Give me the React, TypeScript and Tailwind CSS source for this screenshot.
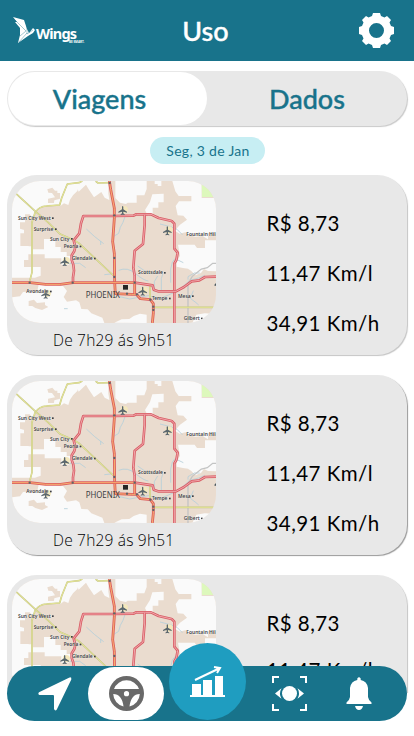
import React from "react";

function Plane({ x, y }: { x: number; y: number }) {
  return (
    <g transform={`translate(${x} ${y})`}>
      <circle cx="5" cy="-3" r="11" fill="#f4e8bd" />
      <path
        d="M-2-12Q0-16 2-12V-4L13 3V6L2 3V8L6 11V13L0 12L-6 13V11L-2 8V3L-13 6V3L-2-4Z"
        fill="#5a666d"
      />
    </g>
  );
}

const places = [
  { name: "Sun City West", x: 54, y: 150, w: 98, dx: 158, dy: 144 },
  { name: "Surprise", x: 101, y: 182, w: 59, dx: 167, dy: 177 },
  { name: "Sun City", x: 150, y: 212, w: 58, dx: 215, dy: 206 },
  { name: "Peoria", x: 191, y: 234, w: 44, dx: 241, dy: 229 },
  { name: "Glendale", x: 215, y: 270, w: 63, dx: 284, dy: 265 },
  { name: "Avondale", x: 79, y: 370, w: 66, dx: 152, dy: 364 },
  { name: "Scottsdale", x: 414, y: 312, w: 75, dx: 494, dy: 308 },
  { name: "Tempe", x: 456, y: 390, w: 46, dx: 509, dy: 385 },
  { name: "Mesa", x: 534, y: 383, w: 38, dx: 578, dy: 378 },
  { name: "Gilbert", x: 551, y: 451, w: 48, dx: 605, dy: 445 },
  { name: "Fountain Hil", x: 559, y: 198, w: 88, dx: 670, dy: 192 },
];

const redRoads = [
  "M219 338V322L222 302L220 284L215 270V256L223 243L226 230L221 211L238 190L243 160L250 138H342L400 137L409 133H453L476 144L515 153L523 161V236L533 248L529 270L523 280V459",
  "M434 134V165L429 222L404 242L400 293L404 316V338",
  "M404 338L438 343L458 346L461 359L474 364H528L552 351L575 334L598 331L615 321L648 320",
];
const orangeRoads = [
  "M328 33L332 58L343 115V145L338 215L343 250L344 338L346 371L395 373L409 373L421 386L451 389L460 401V430L457 459",
  "M36 338H91L137 343H181L219 338H404V371",
];
const yellowRoads = [
  "M48 71L107 125L145 158L180 192L216 208L235 218L345 321",
  "M88 338L96 307V157L105 128Q117 109 140 108L179 105L185 84L202 42L237 38L247 33",
  "M287 33L294 39L329 38",
  "M460 412H641",
  "M450 389V348",
];

function TripMap() {
  return (
    <svg viewBox="36 33 612 426" className="block h-[142px] w-[204px]" preserveAspectRatio="none">
      <rect x="36" y="33" width="612" height="426" fill="#eadccf" />
      <g fill="#fafafa">
        <path d="M36 33H247L238 43L232 63L219 76L210 89L205 105L192 100L181 108L148 104L126 112L108 126L99 145L89 133H75V157H60V176L73 180V190H61V228H98V238H132V207H166V231H182V246H200V258H213V272L206 284H184V265H134V253H85V270H72V291H122V317L105 323H36Z" />
        <path d="M247 33H325V70L328 90L314 83L304 66L282 82L265 56L258 44L236 65L230 51Z" />
        <path d="M346 33H440V57L433 76H410L410 98L383 98L378 102L360 98L346 84Z" />
        <path d="M457 73L491 71V97H475V113H458V132L444 139L435 120L450 96Z" />
        <path d="M517 33H605V84H648V190H624V208L608 198L585 200L569 195L556 187L539 191L524 182L540 164L561 149L550 137L533 136L527 108L537 94H574V78H536L526 64Z" />
        <path d="M534 224H584L591 234H615V211H648V304L624 303L612 297L603 309L586 316L574 303L564 296L549 294L530 290L530 276L540 257Z" />
        <path d="M36 382L60 379L69 366L112 363L116 344H162L189 348L201 363L191 381L201 395L228 391L238 397L244 417L263 418L274 430L307 443L313 459H36Z" />
        <path d="M343 458L365 448L388 447L401 438L420 431L440 434V459Z" />
        <path d="M589 434L614 430L648 432V459H577L583 446Z" />
        <path d="M464 33H484V48H473V42H464Z" />
      </g>
      <g fill="#eadccf">
        <path d="M157 53L165 62H172V69H180V86L163 91L162 99H144V86L165 82L156 69L145 68L142 58Z" />
        <path d="M108 274H126V282H108ZM89 145H150V202H119V218H101V229H86V192H72V170H91Z" />
        <path d="M36 348H66L63 357L47 372H36ZM36 369H56V378H36Z" />
        <path d="M86 393L102 389L111 399L135 397V405L145 411L126 420L106 414L97 408H86Z" />
      </g>
      <path d="M605 33H648V81H606Z" fill="#ddf8bc" />
      <g fill="none" stroke="#b4cfda" strokeWidth="2.5">
        <path d="M259 177L283 199L311 221M302 213V225M376 137L369 157L361 172L356 190L343 198M480 162L511 170L531 178L547 194M205 280H239L257 293M313 314L346 311M356 301Q382 290 407 311T445 333M463 365V335L473 318M489 309L484 326V363M512 338V298L517 276L525 266L550 278M413 288L433 302L454 311M355 379L389 387L445 377L480 386L535 362L569 331L596 324L614 316M564 329V320L583 309H599M192 416H203M580 362L571 385L588 398L596 405" />
      </g>
      <path d="M564 459V340L577 319L604 297L622 293L638 280H648" fill="none" stroke="#c3c4c4" strokeWidth="4" />
      {yellowRoads.map((d) => (
        <g key={d} fill="none" strokeLinejoin="round">
          <path d={d} stroke="#c4c486" strokeWidth="5" />
          <path d={d} stroke="#e4e495" strokeWidth="3" />
        </g>
      ))}
      {redRoads.map((d) => (
        <g key={d} fill="none" strokeLinejoin="round">
          <path d={d} stroke="#d85f67" strokeWidth="8" />
          <path d={d} stroke="#f1a5aa" strokeWidth="3" />
        </g>
      ))}
      {orangeRoads.map((d) => (
        <g key={d} fill="none" strokeLinejoin="round">
          <path d={d} stroke="#dc5f60" strokeWidth="8.5" />
          <path d={d} stroke="#f8b070" strokeWidth="3" />
        </g>
      ))}
      <g fill="#60646a">
        {[[329, 39], [343, 136], [343, 264], [343, 321], [89, 338], [218, 338], [404, 338], [381, 371], [411, 373], [451, 389], [460, 410], [460, 420]].map(([x, y]) => (
          <circle key={`${x}-${y}`} cx={x} cy={y} r="3.5" />
        ))}
      </g>
      <Plane x={368} y={122} />
      <Plane x={502} y={183} />
      <Plane x={194} y={275} />
      <Plane x={137} y={373} />
      <Plane x={428} y={364} />
      <rect x="369" y="345" width="15" height="14" fill="#252525" />
      <path d="M642 346L648 339V348Z" fill="#4d5960" />
      <g fontFamily="Noto Sans, sans-serif" fill="#3c3e43">
        {places.map((p) => (
          <g key={p.name}>
            <text x={p.x} y={p.y} fontSize="14" fontWeight="600" textLength={p.w} lengthAdjust="spacingAndGlyphs" stroke="#fff" strokeOpacity=".45" strokeWidth="2" paintOrder="stroke">
              {p.name}
            </text>
            <rect x={p.dx - 2} y={p.dy - 2} width="5" height="5" />
          </g>
        ))}
        <text x="257" y="385" fontSize="25" textLength="103" lengthAdjust="spacingAndGlyphs">PHOENIX</text>
      </g>
    </svg>
  );
}

function TripCard({ shadow, mapTop, rowGap }: { shadow: string; mapTop: string; rowGap: string }) {
  return (
    <article className={`flex h-[180px] shrink-0 rounded-[30px] bg-[#e8e8e8] pl-[5px] ${shadow}`}>
      <div className={`w-[204px] ${mapTop}`}>
        <div className="h-[142px] overflow-hidden rounded-[28px]">
          <TripMap />
        </div>
        <p className="mt-[5px] pl-[41px] font-['Open_Sans',sans-serif] text-[15.5px] leading-6 font-light tracking-[0.2px] whitespace-nowrap text-black">
          De 7h29 ás 9h51
        </p>
      </div>
      <div className={`ml-[50.5px] flex flex-col pt-[23px] font-['Lato',sans-serif] text-[20.5px] leading-none tracking-[0.45px] whitespace-nowrap text-black ${rowGap}`}>
        <p className="flex h-[50px] items-center">R$ 8,73</p>
        <p className="flex h-[50px] items-center">11,47 Km/l</p>
        <p className="flex h-[50px] items-center">34,91 Km/h</p>
      </div>
    </article>
  );
}

function Logo() {
  return (
    <div className="flex w-[73px] items-start">
      <svg viewBox="0 0 22 27" className="h-[27px] w-[22px] shrink-0" fill="#fff">
        <path d="M0 0L11 3L14 12L16 16L20 11L22 13L20 16L15 19L5 26L7 18L7 11L2 5L4 5Z" />
        <path d="M2 3L13 14L7 19M14 9V17L20 13M14 16L6 25" fill="none" stroke="#18738b" strokeWidth=".4" />
      </svg>
      <div className="mt-[8px] ml-[1px] font-['Noto_Sans',sans-serif] font-bold text-white">
        <div className="text-[14.5px] leading-[16px] tracking-[-0.8px]">Wings</div>
        <div className="ml-[33px] text-[3px] leading-[3px] whitespace-nowrap">BE SMART.</div>
      </div>
    </div>
  );
}

function Gear() {
  return (
    <svg viewBox="0 0 35 35" className="size-[35px]" fill="#fff">
      <path
        fillRule="evenodd"
        d="M14 0H21L22 3L25.5 4.5L28 3L32 7L30.5 9.5L32 13L35 14V21L32 22L30.5 25.5L32 28L28 32L25.5 30.5L22 32L21 35H14L13 32L9.5 30.5L7 32L3 28L4.5 25.5L3 22L0 21V14L3 13L4.5 9.5L3 7L7 3L9.5 4.5L13 3ZM17.5 10A7.5 7.5 0 1 0 17.5 25A7.5 7.5 0 1 0 17.5 10Z"
      />
    </svg>
  );
}

function BottomNav() {
  return (
    <nav className="absolute top-[666px] left-[7px] flex h-[55px] w-[400px] items-center rounded-[28px] bg-[#18738b]">
      <svg viewBox="0 0 34 34" className="ml-[31px] h-[34px] w-[34px]" fill="#fff">
        <path d="M33.2.8Q32.4-.1 31 .8L1 15.3Q-.5 17 1.5 18H15Q16 18 16 19V32Q17.2 34.6 18.8 32.5L33.3 2.6Z" />
      </svg>
      <div className="ml-4 flex h-[53px] w-[76px] items-center justify-center rounded-[27px] bg-white">
        <svg viewBox="0 0 35 35" className="ml-[1px] size-[35px]">
          <circle cx="17.5" cy="17.5" r="17.5" fill="#696969" />
          <path
            d="M5 13A13.3 13.3 0 0 1 30 13ZM4.2 18Q13 18 14.5 30.5A13.4 13.4 0 0 1 4.2 18ZM30.8 18Q22 18 20.5 30.5A13.4 13.4 0 0 0 30.8 18Z"
            fill="#fff"
          />
          <circle cx="17.5" cy="17.7" r="2.6" fill="#fff" />
        </svg>
      </div>
      <div className="relative top-[-12px] ml-[5px] flex size-[77px] items-center justify-center rounded-full bg-[#1f9dc0]">
        <svg viewBox="0 0 35 33" className="h-[33px] w-[35px]" fill="#fff">
          <path d="M0 30H35V32H0ZM2 19H11V30H2ZM13 15H22V30H13ZM25 11H33V30H25Z" />
          <path d="M5 15L29 3.5M24 2L30 3L27 8" fill="none" stroke="#fff" strokeWidth="2" />
        </svg>
      </div>
      <svg viewBox="0 0 35 35" className="ml-[26px] size-[35px]">
        <path d="M1 7V1H7M28 1H34V7M1 28V34H7M28 34H34V28" fill="none" stroke="#fff" strokeWidth="2" />
        <circle cx="17.5" cy="17.5" r="7.5" fill="#fff" />
        <path d="M9.5 12.2L3 17.5L9.5 22.8Q6.5 17.5 9.5 12.2ZM25.5 12.2Q28.5 17.5 25.5 22.8L32 17.5Z" fill="#fff" />
      </svg>
      <svg viewBox="0 0 26 34" className="ml-[39px] h-[34px] w-[26px]" fill="#fff">
        <path d="M11.3 3V1.5Q13-1 14.7 1.5V3Q21 4 22 11V20Q22.4 23 25.5 25.5V27H.5V25.5Q3.6 23 4 20V11Q5 4 11.3 3ZM9 29H17Q16 33 13 33T9 29Z" />
      </svg>
    </nav>
  );
}

export default function App() {
  return (
    <div className="relative flex h-[736px] w-[414px] flex-col overflow-hidden bg-white">
      <header className="grid h-[61px] shrink-0 grid-cols-[1fr_auto_1fr] items-center bg-[#18738b] pr-5 pl-[13px]">
        <Logo />
        <h1 className="pl-[4px] font-['Lato',sans-serif] text-[27px] leading-9 font-medium text-white [-webkit-text-stroke:0.4px_#fff]">Uso</h1>
        <div className="justify-self-end">
          <Gear />
        </div>
      </header>
      <main className="flex h-[632px] flex-col overflow-hidden px-[7px] pt-[10px]">
        <div className="flex h-[55px] w-[400px] shrink-0 items-center rounded-[28px] bg-[#e8e8e8] pl-[1px] font-['Lato',sans-serif] text-[27px] font-medium text-[#18738b] shadow-[1px_1px_1px_#c9c9c9] [-webkit-text-stroke:0.4px_#18738b]">
          <div className="flex h-[53px] w-[199px] items-center justify-center rounded-[27px] bg-white pt-[1px] pr-[16px]">Viagens</div>
          <div className="flex-1 pt-[1px] text-center">Dados</div>
        </div>
        <div className="mt-[11px] flex h-[27px] w-[115px] shrink-0 items-center justify-center self-center rounded-full bg-[#c7eef3] pl-[2px] font-['Lato',sans-serif] text-[14px] tracking-[0.3px] text-[#18738b]">
          Seg, 3 de Jan
        </div>
        <div className="mt-[11px] flex flex-col gap-5">
          <TripCard shadow="shadow-[1px_1px_1px_#c5c5c5]" mapTop="pt-[6px]" rowGap="gap-0" />
          <TripCard shadow="shadow-[1px_1px_1px_#999]" mapTop="pt-[6px]" rowGap="gap-0" />
          <TripCard shadow="shadow-[1px_1px_1px_#c5c5c5]" mapTop="pt-[4px]" rowGap="-space-y-[3px]" />
        </div>
      </main>
      <BottomNav />
    </div>
  );
}
